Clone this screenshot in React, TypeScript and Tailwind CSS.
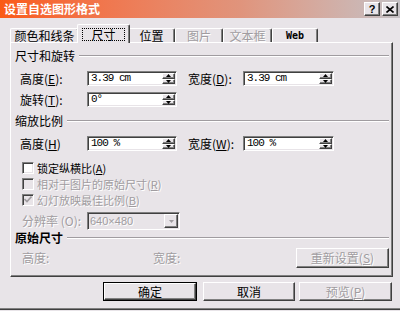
import type { ReactNode } from 'react'

const raised =
  'border border-t-white border-l-white border-r-[#404040] border-b-[#404040] shadow-[inset_-1px_-1px_0_#808080] bg-[#e8e4e8]'
const sunken =
  'border border-t-[#808080] border-l-[#808080] border-r-white border-b-white shadow-[inset_1px_1px_0_#404040,inset_-1px_-1px_0_#e8e4e8]'
const dis = 'text-[#a09ca0] [text-shadow:1px_1px_0_#ffffff]'

function Arrow({ up, gray }: { up?: boolean; gray?: boolean }) {
  return (
    <svg width="5" height="3" viewBox="0 0 5 3" className="block">
      <polygon
        points={up ? '2.5,0 5,3 0,3' : '0,0 5,0 2.5,3'}
        fill={gray ? '#a09ca0' : '#000'}
      />
    </svg>
  )
}

function Mn({ t, k, colon = true }: { t: string; k: string; colon?: boolean }) {
  return (
    <span className="whitespace-nowrap leading-[12px]">
      {t}(<u>{k}</u>){colon ? ':' : ''}
    </span>
  )
}

function SpinInput({ value, w }: { value: string; w: string }) {
  return (
    <div className={`${sunken} ${w} flex h-[15px] bg-white`}>
      <div className="flex flex-1 items-center pl-[3px] font-['Liberation_Mono',monospace] text-[11px] leading-none tracking-[-1px] text-black">
        {value}
      </div>
      <div className="my-[1px] mr-[1px] flex w-[13px] flex-col">
        <div className={`${raised} flex flex-1 items-center justify-center`}>
          <Arrow up />
        </div>
        <div className={`${raised} flex flex-1 items-center justify-center`}>
          <Arrow />
        </div>
      </div>
    </div>
  )
}

function GroupHead({ children, dark }: { children: ReactNode; dark?: boolean }) {
  return (
    <div className="flex h-[14px] items-center pl-[4px] pr-[3px]">
      <span className={`leading-[12px] ${dark ? 'font-bold text-black' : 'text-black'}`}>{children}</span>
      <div className="ml-[4px] h-0 flex-1 border-t border-b border-t-[#a09ca0] border-b-white" />
    </div>
  )
}

function Check({
  children,
  checked,
  disabled,
  className = '',
}: {
  children: ReactNode
  checked?: boolean
  disabled?: boolean
  className?: string
}) {
  return (
    <div className={`flex h-[13px] items-center pl-[11px] ${className}`}>
      <div
        className={`${sunken} flex h-[12px] w-[12px] shrink-0 items-center justify-center ${disabled ? 'bg-[#e8e4e8]' : 'bg-white'}`}
      >
        {checked && (
          <svg width="8" height="7" viewBox="0 0 8 7">
            <path d="M0.5 3 L3 5.5 L7.5 0.5" stroke="#a09ca0" strokeWidth="1.6" fill="none" />
          </svg>
        )}
      </div>
      <span className={`ml-[3px] text-[11px] leading-[12px] ${disabled ? dis : 'text-black'}`}>{children}</span>
    </div>
  )
}

function Tab({ children, w, off, sel }: { children: ReactNode; w: string; off?: boolean; sel?: boolean }) {
  return (
    <div
      className={`flex items-center justify-center border-t border-l border-r border-t-white border-l-white border-r-[#404040] bg-[#e8e4e8] leading-[12px] shadow-[inset_-1px_0_0_#808080] ${w} ${
        sel ? 'relative z-10 -mx-[2px] -mb-px h-[19px] rounded-t-[2px]' : 'h-[14px] rounded-t-[2px]'
      } ${off ? dis : 'text-black'}`}
    >
      {children}
    </div>
  )
}

export default function App() {
  return (
    <div className="flex h-[311px] w-[400px] flex-col overflow-hidden bg-[#e8e4e8] font-['Noto_Sans_CJK_SC',sans-serif] text-[12px] leading-[12px]">
      <div className="flex h-[18px] shrink-0 items-center justify-between bg-gradient-to-r from-[#fa5a14] via-[#e0947c] via-60% to-[#c4c0c4] pl-[4px] pr-[2px]">
        <span className="font-bold leading-[12px] text-white">设置自选图形格式</span>
        <div className="flex gap-[2px]">
          <div className={`${raised} flex h-[14px] w-[16px] items-center justify-center font-['Liberation_Sans',sans-serif] text-[11px] font-bold leading-none text-black`}>
            ?
          </div>
          <div className={`${raised} flex h-[14px] w-[16px] items-center justify-center`}>
            <svg width="8" height="7" viewBox="0 0 8 7">
              <path d="M0.5 0.5 L7.5 6.5 M7.5 0.5 L0.5 6.5" stroke="#000" strokeWidth="1.6" />
            </svg>
          </div>
        </div>
      </div>

      <div className="mt-[5px] flex h-[19px] items-end pl-[10px]">
        <Tab w="w-[69px]">颜色和线条</Tab>
        <Tab w="w-[53px]" sel>
          <span className="border border-dotted border-black px-[8px] leading-[11px]">尺寸</span>
        </Tab>
        <Tab w="w-[47px]">位置</Tab>
        <Tab w="w-[48px]" off>
          图片
        </Tab>
        <Tab w="w-[49px]" off>
          文本框
        </Tab>
        <Tab w="w-[46px]">
          <span className="font-['DejaVu_Sans_Mono',monospace] text-[10px] font-bold">Web</span>
        </Tab>
      </div>

      <div className="ml-[10px] flex h-[235px] w-[383px] flex-col border border-t-white border-l-white border-r-[#404040] border-b-[#404040] shadow-[inset_-1px_-1px_0_#808080]">
        <div className="mt-[6px]">
          <GroupHead>尺寸和旋转</GroupHead>
        </div>
        <div className="mt-[8px] flex h-[15px] items-center pl-[9px]">
          <span className="w-[67px]">
            <Mn t="高度" k="E" />
          </span>
          <SpinInput value="3.39 cm" w="w-[90px]" />
          <span className="ml-[11px] w-[55px]">
            <Mn t="宽度" k="D" />
          </span>
          <SpinInput value="3.39 cm" w="w-[91px]" />
        </div>
        <div className="mt-[6px] flex h-[15px] items-center pl-[9px]">
          <span className="w-[67px]">
            <Mn t="旋转" k="T" />
          </span>
          <SpinInput value="0°" w="w-[90px]" />
        </div>

        <div className="mt-[7px]">
          <GroupHead>缩放比例</GroupHead>
        </div>
        <div className="mt-[8px] flex h-[15px] items-center pl-[9px]">
          <span className="w-[67px]">
            <Mn t="高度" k="H" colon={false} />
          </span>
          <SpinInput value="100 %" w="w-[90px]" />
          <span className="ml-[11px] w-[55px]">
            <Mn t="宽度" k="W" />
          </span>
          <SpinInput value="100 %" w="w-[91px]" />
        </div>
        <Check className="mt-[10px]">
          <Mn t="锁定纵横比" k="A" colon={false} />
        </Check>
        <Check className="mt-[3px]" disabled>
          <Mn t="相对于图片的原始尺寸" k="R" colon={false} />
        </Check>
        <Check className="mt-[3px]" disabled checked>
          <Mn t="幻灯放映最佳比例" k="B" colon={false} />
        </Check>
        <div className="mt-[6px] flex h-[18px] items-center pl-[11px]">
          <span className={`w-[65px] ${dis}`}>分辨率 (O):</span>
          <div className={`${sunken} flex h-[18px] w-[93px] bg-[#e8e4e8]`}>
            <div className={`flex flex-1 items-center pl-[2px] font-['Liberation_Sans',sans-serif] text-[11px] leading-none ${dis}`}>
              640×480
            </div>
            <div className={`${raised} m-[1px] flex w-[14px] items-center justify-center`}>
              <Arrow gray />
            </div>
          </div>
        </div>

        <div className="mt-[1px]">
          <GroupHead dark>原始尺寸</GroupHead>
        </div>
        <div className="mt-[3px] flex h-[20px] items-center pl-[11px]">
          <span className={`w-[131px] ${dis}`}>高度:</span>
          <span className={dis}>宽度:</span>
          <div className={`${raised} ml-auto mr-[3px] flex h-[20px] w-[93px] items-center justify-center`}>
            <span className={dis}>
              <Mn t="重新设置" k="S" colon={false} />
            </span>
          </div>
        </div>
      </div>

      <div className="mt-[5px] flex h-[19px] pl-[103px]">
        <div className="w-[94px] border border-black">
          <div className={`${raised} flex h-full items-center justify-center text-black`}>确定</div>
        </div>
        <div className={`${raised} ml-[6px] flex w-[92px] items-center justify-center text-black`}>取消</div>
        <div className={`${raised} ml-[4px] flex w-[93px] items-center justify-center`}>
          <span className={dis}>
            <Mn t="预览" k="P" colon={false} />
          </span>
        </div>
      </div>

      <div className="mb-[1px] mt-auto h-[2px] border-t border-t-[#808080] bg-[#404040]" />
    </div>
  )
}
